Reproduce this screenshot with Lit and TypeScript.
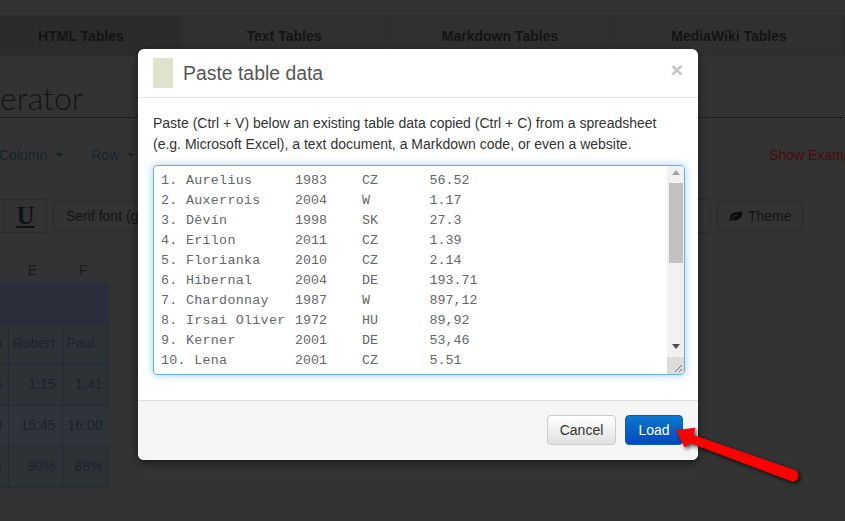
import { LitElement, html, css } from "lit";
import { customElement } from "lit/decorators.js";

const ROWS = [
  ["1. Aurelius", "1983", "CZ", "56.52"],
  ["2. Auxerrois", "2004", "W", "1.17"],
  ["3. Děvín", "1998", "SK", "27.3"],
  ["4. Erilon", "2011", "CZ", "1.39"],
  ["5. Florianka", "2010", "CZ", "2.14"],
  ["6. Hibernal", "2004", "DE", "193.71"],
  ["7. Chardonnay", "1987", "W", "897,12"],
  ["8. Irsai Oliver", "1972", "HU", "89,92"],
  ["9. Kerner", "2001", "DE", "53,46"],
  ["10. Lena", "2001", "CZ", "5.51"],
];

const TABS = ["HTML Tables", "Text Tables", "Markdown Tables", "MediaWiki Tables"];

@customElement("app-root")
export class AppRoot extends LitElement {
  static styles = css`
    :host {
      display: block;
      position: relative;
      width: 845px;
      height: 521px;
      overflow: hidden;
      background: #333;
      font-family: "Liberation Sans", Arial, sans-serif;
      font-size: 14px;
      color: #0a0a0a;
    }
    .page { display: flex; flex-direction: column; height: 100%; }
    .tabs {
      margin-top: 15px;
      height: 41px;
      display: grid;
      grid-template-columns: 183px 203px 229px 229px 1px;
      background: #303030;
      border-top: 1px solid #2d2d2d;
      border-bottom: 1px solid #2d2d2d;
      box-sizing: border-box;
    }
    .tab {
      display: flex;
      align-items: center;
      justify-content: center;
      padding-top: 1px;
      font-weight: 700;
      font-size: 14px;
      color: #141414;
      border-right: 1px solid #2b2b2b;
    }
    .tab.active { background: #2b2b2b; padding-right: 20px; }
    .heading {
      height: 62px;
      box-sizing: border-box;
      border-bottom: 1px dotted #0a0a0a;
      font-family: Lato, sans-serif;
      font-weight: 300;
      font-size: 32px;
      line-height: 83px;
      color: #141414;
      overflow: hidden;
    }
    .menu {
      height: 37px;
      margin-top: 18px;
      margin-bottom: 1px;
      display: flex;
      align-items: center;
      font-size: 14px;
      color: #14252f;
    }
    .menu .item { display: flex; align-items: center; gap: 5px; margin-right: 28px; }
    .menu .item:first-child { margin-left: -1px; }
    .caret { width: 0; height: 0; border: 4px solid transparent; border-top-color: #14252f; border-bottom: 0; margin-left: 3px; }
    .menu .example { margin-left: auto; color: #470b0b; white-space: nowrap; width: 76px; overflow: hidden; }
    .tools {
      height: 34px;
      margin-top: 25px;
      display: flex;
      align-items: center;
      gap: 6px;
    }
    .btn {
      box-sizing: border-box;
      display: flex;
      align-items: center;
      border: 1px solid #2a2a2a;
      border-radius: 4px;
      color: #141414;
    }
    .u {
      width: 47px;
      height: 34px;
      justify-content: center;
      padding-left: 5px;
      font-family: "Liberation Serif", serif;
      font-weight: 700;
      font-size: 25px;
      text-decoration: underline;
      border-left: 0;
      border-radius: 0 4px 4px 0;
      position: relative;
      color: #0c1216;
    }
    .u::before { content: ""; position: absolute; left: 3px; top: 0; bottom: 0; width: 1px; background: #2a2a2a; }
    .serif { width: 150px; height: 30px; padding-left: 12px; white-space: nowrap; overflow: hidden; }
    .spacer { flex: 1; }
    .other { width: 60px; height: 34px; }
    .theme { width: 86px; height: 30px; margin-right: 42px; padding-left: 11px; gap: 6px; }
    .theme svg { width: 13px; height: 13px; fill: #0c0c0c; }
    .letters {
      margin-top: 27px;
      height: 22px;
      display: grid;
      grid-template-columns: 5.5px 54px 47px;
      font-size: 14px;
      line-height: 20px;
      color: #1a1a1a;
      text-align: center;
    }
    .table {
      width: 109px;
      display: grid;
      grid-template-columns: 7.5px 54px 47px;
      grid-template-rows: 40.5px repeat(4, 41px);
      background: #2d3235;
      border-right: 1px solid #232b3a;
      border-bottom: 1px solid #232b3a;
      box-sizing: border-box;
      color: #1c2230;
    }
    .band { grid-column: 1 / -1; background: #2a2d3a; }
    .cell {
      display: flex;
      align-items: center;
      justify-content: flex-end;
      padding: 0 6px 2px 0;
      border-top: 1px solid #232b3a;
      border-left: 1px solid #232b3a;
      box-sizing: border-box;
      overflow: hidden;
      white-space: nowrap;
    }
    .cell.first { border-left: 0; padding-right: 5.5px; }
    .cell.name { justify-content: flex-start; padding: 0 0 2px 4px; }
    .row-alt { background: #2e3437; }

    .modal {
      position: absolute;
      left: 138px;
      top: 49px;
      width: 560px;
      height: 411px;
      background: #fff;
      border-radius: 6px;
      box-shadow: 0 3px 9px rgba(0, 0, 0, 0.5);
      display: flex;
      flex-direction: column;
      color: #333;
    }
    .m-head {
      height: 49px;
      box-sizing: border-box;
      border-bottom: 1px solid #e5e5e5;
      padding: 9px 15px 0;
      display: flex;
      align-items: flex-start;
      gap: 10px;
    }
    .swatch { width: 20px; height: 30px; background: #e0e3cc; }
    .title { font-size: 19.4px; line-height: 30px; color: #555; flex: 1; }
    .close { font-size: 21px; font-weight: 700; line-height: 24px; color: #c4c4c4; }
    .m-body { height: 302px; box-sizing: border-box; padding: 15px 13px 25px 15px; }
    .m-body p { margin: 0 0 10px; line-height: 21px; font-size: 14px; white-space: nowrap; }
    .area {
      box-sizing: border-box;
      height: 210px;
      width: 532px;
      border: 1px solid #66afe9;
      border-radius: 4px;
      box-shadow: 0 0 8px rgba(102, 175, 233, 0.6);
      display: flex;
      overflow: hidden;
    }
    .lines {
      flex: 1;
      padding: 5px 0 0 7px;
      font-family: "Liberation Mono", "Courier New", monospace;
      font-size: 13.33px;
      color: #666;
    }
    .line {
      display: grid;
      grid-template-columns: 134px 67px 67.5px 1fr;
      height: 20px;
      line-height: 20px;
      white-space: pre;
    }
    .line span:first-child { letter-spacing: 0.3px; }
    .bar { width: 17px; position: relative; background: #f1f1f1; }
    .thumb { position: absolute; left: 2px; right: 1px; top: 17px; height: 80px; background: #c1c1c1; }
    .up, .down { position: absolute; left: 5px; width: 0; height: 0; border: 4px solid transparent; }
    .up { top: 4px; border-top: 0; border-bottom: 5px solid #a3a3a3; }
    .down { top: 178px; border-bottom: 0; border-top: 5px solid #505050; }
    .grip { position: absolute; left: 0; right: 0; bottom: 0; height: 17px; background: #dcdcdc; }
    .grip svg { position: absolute; right: 0; bottom: 0; width: 17px; height: 17px; }
    .m-foot {
      flex: 1;
      background: #f5f5f5;
      border-top: 1px solid #ddd;
      border-radius: 0 0 6px 6px;
      padding: 14px 15px 0;
      display: flex;
      justify-content: flex-end;
      gap: 9px;
    }
    .action {
      box-sizing: border-box;
      height: 30px;
      border-radius: 4px;
      display: flex;
      align-items: center;
      justify-content: center;
      font-size: 14px;
    }
    .cancel {
      width: 69px;
      border: 1px solid #ccc;
      color: #333;
      background: linear-gradient(#fff, #e0e0e0);
    }
    .load {
      width: 58px;
      border: 1px solid #0a5db5;
      color: #fff;
      background: linear-gradient(#0b78cb, #0048c2);
    }
    .arrow { position: absolute; left: 660px; top: 415px; width: 150px; height: 75px; overflow: visible; filter: drop-shadow(2px 2px 2px rgba(0,0,0,.75)); }
  `;

  render() {
    return html`
      <div class="page">
        <div class="tabs">
          ${TABS.map((t, i) => html`<div class="tab ${i === 0 ? "active" : ""}">${t}</div>`)}
        </div>
        <div class="heading">erator</div>
        <div class="menu">
          <span class="item">Column<i class="caret"></i></span>
          <span class="item">Row<i class="caret"></i></span>
          <span class="example">Show Example</span>
        </div>
        <div class="tools">
          <div class="btn u">U</div>
          <div class="btn serif">Serif font (g</div>
          <div class="spacer"></div>
          <div class="btn other"></div>
          <div class="btn theme">
            <svg viewBox="0 0 1792 1792"><path d="M1280 704q0-26-19-45t-45-19q-172 0-318 49.5t-259.5 134-235.5 219.5q-19 21-19 45 0 26 19 45t45 19q24 0 45-19 27-24 74-71t67-66q137-124 268.5-176t313.5-52q26 0 45-19t19-45zm512-198q0 95-20 193-46 224-184.5 383t-357.5 268q-214 108-438 108-148 0-286-47-15-5-88-42t-96-37q-16 0-39.5 32t-45 70-52.5 70-60 32q-30 0-51-11t-31-24-27-42q-2-4-6-11t-5.5-10-3-9.5-1.5-13.5q0-35 31-73.5t68-65.5 68-56 31-48q0-4-14-38t-16-44q-9-51-9-104 0-115 43.5-220t119-184.5 170.5-139 204-95.500q55-18 145-25.500t179.500-9 178.500-6 163.500-24 113.500-56.500l29.500-29.500 29.500-28 27-20 36.500-16 43.500-4.500q39 0 70.500 46t47.500 112 24 124 8 96z"/></svg>
            Theme
          </div>
        </div>
        <div class="letters"><span></span><span>E</span><span>F</span></div>
        <div class="table">
          <div class="band"></div>
          <div class="cell first">a</div><div class="cell name">Robert</div><div class="cell name">Paul</div>
          <div class="cell first">5</div><div class="cell">1:15</div><div class="cell">1:41</div>
          <div class="cell first row-alt">0</div><div class="cell row-alt">15:45</div><div class="cell row-alt">16:00</div>
          <div class="cell first">%</div><div class="cell">90%</div><div class="cell">88%</div>
        </div>
      </div>

      <div class="modal">
        <div class="m-head">
          <div class="swatch"></div>
          <div class="title">Paste table data</div>
          <div class="close">×</div>
        </div>
        <div class="m-body">
          <p>Paste (Ctrl + V) below an existing table data copied (Ctrl + C) from a spreadsheet<br />(e.g. Microsoft Excel), a text document, a Markdown code, or even a website.</p>
          <div class="area">
            <div class="lines">
              ${ROWS.map((r) => html`<div class="line">${r.map((c) => html`<span>${c}</span>`)}</div>`)}
            </div>
            <div class="bar">
              <i class="up"></i>
              <div class="thumb"></div>
              <i class="down"></i>
              <div class="grip">
                <svg viewBox="0 0 17 17"><path d="M8 15L15 8M12 15L15 12" stroke="#777" stroke-width="1" fill="none"/></svg>
              </div>
            </div>
          </div>
        </div>
        <div class="m-foot">
          <div class="action cancel">Cancel</div>
          <div class="action load">Load</div>
        </div>
      </div>

      <svg class="arrow" viewBox="0 0 150 75">
        <path d="M16.700 15.700L35 13.300L32.300 20L136 56L138 60Q138 66 132 66L30 27.500L25 32Z" fill="#f00" stroke="#f00" stroke-width="1" stroke-linejoin="round"/>
      </svg>
    `;
  }
}
